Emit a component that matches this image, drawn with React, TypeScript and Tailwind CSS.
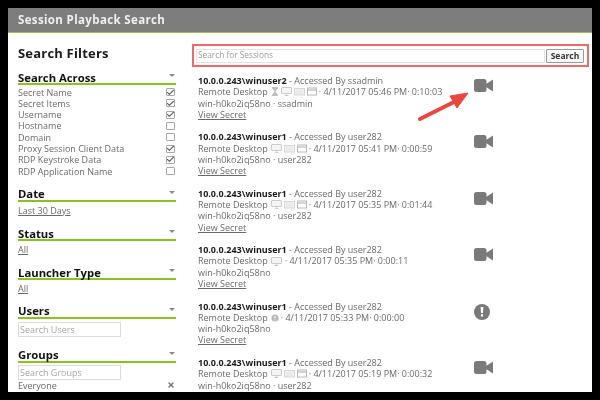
import { Check, X } from "lucide-react";

const filters = [
  { label: "Secret Name", checked: true },
  { label: "Secret Items", checked: true },
  { label: "Username", checked: true },
  { label: "Hostname", checked: false },
  { label: "Domain", checked: false },
  { label: "Proxy Session Client Data", checked: true },
  { label: "RDP Keystroke Data", checked: true },
  { label: "RDP Application Name", checked: false },
];

const sessions = [
  { user: "winuser2", by: "ssadmin", date: "4/11/2017 05:46 PM", time: "0:10:03", icons: ["hourglass", "monitor", "mail", "window"], host: "win-h0ko2iq58no · ssadmin", kind: "video" },
  { user: "winuser1", by: "user282", date: "4/11/2017 05:41 PM", time: "0:00:59", icons: ["monitor", "mail", "window"], host: "win-h0ko2iq58no · user282", kind: "video" },
  { user: "winuser1", by: "user282", date: "4/11/2017 05:35 PM", time: "0:01:44", icons: ["monitor", "mail", "window"], host: "win-h0ko2iq58no · user282", kind: "video" },
  { user: "winuser1", by: "user282", date: "4/11/2017 05:35 PM", time: "0:00:11", icons: ["monitor"], host: "win-h0ko2iq58no", kind: "video" },
  { user: "winuser1", by: "user282", date: "4/11/2017 05:33 PM", time: "0:00:00", icons: ["info"], host: "win-h0ko2iq58no", kind: "alert" },
  { user: "winuser1", by: "user282", date: "4/11/2017 05:19 PM", time: "0:00:32", icons: ["monitor", "mail", "window"], host: "win-h0ko2iq58no · user282", kind: "video" },
];

function SmallIcon({ name }: { name: string }) {
  if (name === "hourglass") {
    return (
      <svg width="8" height="9" viewBox="0 0 8 9" className="mr-[2px]">
        <path d="M1 .5h6M1 8.5h6M1.5 1 L6.5 1 L4 4.5 L6.5 8 L1.5 8 L4 4.5 Z" fill="#c4c4c4" stroke="#b0b0b0" strokeWidth="0.7" />
      </svg>
    );
  }
  if (name === "monitor") {
    return (
      <svg width="11" height="9" viewBox="0 0 11 9" className="mr-[2px]">
        <rect x="0.5" y="0.5" width="10" height="6" rx="0.5" fill="#f5f5f5" stroke="#cbcbcb" />
        <path d="M3.5 8.5h4M5.5 7v1.5" stroke="#cbcbcb" />
      </svg>
    );
  }
  if (name === "mail") {
    return (
      <svg width="11" height="9" viewBox="0 0 11 9" className="mr-[2px]">
        <rect x="0.5" y="1.5" width="10" height="6.5" fill="#f2f2f2" stroke="#d6d6d6" />
        <path d="M2 4h7M2 6h7" stroke="#e2e2e2" />
      </svg>
    );
  }
  if (name === "window") {
    return (
      <svg width="10" height="9" viewBox="0 0 10 9" className="mr-[1px]">
        <rect x="0.5" y="1" width="9" height="7" fill="#fff" stroke="#b8b8b8" />
        <path d="M0.5 3h9" stroke="#b8b8b8" strokeWidth="1.2" />
      </svg>
    );
  }
  return (
    <svg width="8" height="8" viewBox="0 0 8 8" className="mr-[1px]">
      <circle cx="4" cy="4" r="3.6" fill="#b8b8b8" />
      <path d="M4 1.8v2.6M4 5.4v1" stroke="#fff" strokeWidth="1" />
    </svg>
  );
}

function VideoIcon() {
  return (
    <svg width="19" height="13" viewBox="0 0 19 13">
      <rect x="0" y="0" width="12.5" height="13" rx="2.5" fill="#7a7a7a" />
      <path d="M12 5 L19 0.5 V12.5 L12 8 Z" fill="#7a7a7a" />
    </svg>
  );
}

function AlertIcon() {
  return (
    <svg width="16" height="16" viewBox="0 0 16 16">
      <circle cx="8" cy="8" r="8" fill="#7a7a7a" />
      <path d="M6.6 3h2.8l-.4 6H7z" fill="#fff" />
      <rect x="6.9" y="10.2" width="2.2" height="2.4" fill="#fff" />
    </svg>
  );
}

function SectionTitle({ title }: { title: string }) {
  return (
    <div className="flex h-[14px] shrink-0 items-center justify-between border-b-2 border-[#8cc220] pr-[1px]">
      <h3 className="text-[11.3px] leading-[11px] font-bold text-[#111]">{title}</h3>
      <span className="mb-[3px] h-0 w-0 border-x-[3px] border-t-[3px] border-x-transparent border-t-[#8a8a8a]" />
    </div>
  );
}

function CheckRow({ label, checked }: { label: string; checked: boolean }) {
  return (
    <div className="flex h-[11.3px] items-center justify-between pr-[1px]">
      <span>{label}</span>
      <span className="flex h-[8px] w-[9px] items-center justify-center rounded-[1px] border border-[#a8a8a8] bg-white">
        {checked && <Check size={9} strokeWidth={3} className="shrink-0 text-[#666]" />}
      </span>
    </div>
  );
}

function Sidebar() {
  return (
    <aside className="flex w-[158px] shrink-0 flex-col text-[9px] leading-[11.3px] text-[#6a6a6a]">
      <h2 className="mb-[9px] text-[13px] leading-[18px] font-bold tracking-[0.2px] text-[#1a1a1a]">Search Filters</h2>
      <SectionTitle title="Search Across" />
      <div className="mt-[1.5px] mb-[11px]">
        {filters.map((f) => (
          <CheckRow key={f.label} label={f.label} checked={f.checked} />
        ))}
      </div>
      <SectionTitle title="Date" />
      <a className="mt-[3px] mb-[11px] underline">Last 30 Days</a>
      <SectionTitle title="Status" />
      <a className="mt-[3px] mb-[11px] underline">All</a>
      <SectionTitle title="Launcher Type" />
      <a className="mt-[3px] mb-[10px] underline">All</a>
      <SectionTitle title="Users" />
      <div className="mt-[3px] mb-[12px] flex h-[15px] w-[103px] shrink-0 items-center border border-[#dcdcdc] px-[1px] text-[#a5a5a5]">Search Users</div>
      <SectionTitle title="Groups" />
      <div className="mt-[2px] flex h-[15px] w-[103px] shrink-0 items-center border border-[#dcdcdc] px-[1px] text-[#a5a5a5]">Search Groups</div>
      <div className="flex items-center justify-between pr-[1px]">
        <span>Everyone</span>
        <X size={8} strokeWidth={4} className="text-[#777]" />
      </div>
    </aside>
  );
}

function SessionRow({ s, last }: { s: (typeof sessions)[number]; last: boolean }) {
  return (
    <div className={last ? "flex items-start" : "flex h-[56.4px] items-start"}>
      <div className="w-[276px] shrink-0 whitespace-nowrap">
        <div>
          <span className="font-bold text-[#1a1a1a]">10.0.0.243\{s.user}</span> - Accessed By {s.by}
        </div>
        <div className="flex items-center">
          <span className="mr-[3px]">Remote Desktop</span>
          {s.icons.map((name, i) => (
            <SmallIcon key={i} name={name} />
          ))}
          <span className="ml-[1px]">· {s.date}· {s.time}</span>
        </div>
        <div>{s.host}</div>
        {!last && <a className="underline">View Secret</a>}
      </div>
      <div className={s.kind === "video" ? "mt-[4px]" : "mt-[3px]"}>
        {s.kind === "video" ? <VideoIcon /> : <AlertIcon />}
      </div>
    </div>
  );
}

export default function App() {
  return (
    <div className="h-[400px] w-[600px] overflow-hidden bg-black p-2" style={{ fontFamily: '"Open Sans", "Noto Sans", sans-serif' }}>
      <div className="relative flex h-[384px] flex-col overflow-hidden bg-white blur-[0.3px]">
        <header className="flex h-[25px] shrink-0 items-center border-b border-[#9cbf45] bg-[#7d7d7d] pl-[10px] text-[11.5px] font-bold tracking-[0.36px] text-[#f0f0f0]">
          Session Playback Search
        </header>
        <div className="flex min-h-0 flex-1 pt-[11px] pl-[10px]">
          <Sidebar />
          <main className="ml-[16px] min-w-0 flex-1">
            <div className="flex h-[23px] w-[397px] items-center border-2 border-[#ee6a6a] pr-[3px] pl-[2px]">
              <div className="flex h-[14px] flex-1 items-center border border-[#e2e2e2] px-[1px] text-[8.3px] text-[#9a9a9a]">Search for Sessions</div>
              <button className="ml-[1px] h-[14px] w-[38px] rounded-[1px] border border-[#9a9a9a] bg-[#f7f7f7] text-[8.5px] leading-[11px] font-bold text-[#333]">Search</button>
            </div>
            <div className="mt-[8px] pl-[6px] text-[9px] leading-[11.3px] text-[#6a6a6a]">
              {sessions.map((s, i) => (
                <SessionRow key={i} s={s} last={i === sessions.length - 1} />
              ))}
            </div>
          </main>
        </div>
        <svg width="60" height="40" viewBox="0 0 60 40" className="absolute top-[78px] left-[406px]">
          <path d="M6 33 L42 15" stroke="#e8473f" strokeWidth="4" strokeLinecap="round" />
          <path d="M54 7 L36 10 L43 22 Z" fill="#e8473f" stroke="#e8473f" strokeWidth="1" strokeLinejoin="round" />
        </svg>
      </div>
    </div>
  );
}
